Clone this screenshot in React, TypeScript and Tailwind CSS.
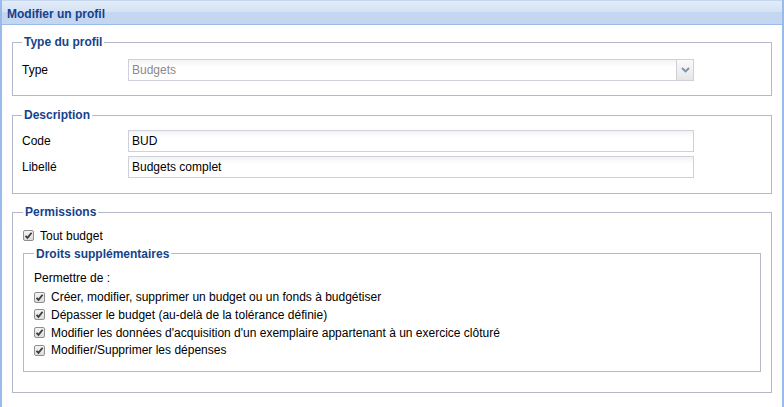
import React from 'react';

const font = { fontFamily: '"Liberation Sans", Arial, sans-serif' };

function Check() {
    return (
        <span className="inline-flex h-[11px] w-[11px] shrink-0 items-center justify-center rounded-[2px] border border-[#8f8f8f] bg-gradient-to-b from-[#f4f4f4] to-[#dcdcdc]">
            <svg width="9" height="9" viewBox="0 0 9 9">
                <path d="M1.5 4.8 L3.5 6.8 L7.6 1.8" fill="none" stroke="#3c3c3c" strokeWidth="1.8" />
            </svg>
        </span>
    );
}

function CheckRow({ label }: { label: string }) {
    return (
        <label className="flex h-[17.6px] items-center gap-[6px] text-[12px] text-black">
            <Check />
            <span>{label}</span>
        </label>
    );
}

function Legend({ children }: { children: React.ReactNode }) {
    return <legend className="px-[2px] text-[12px] font-bold leading-[14px] text-[#15428b]">{children}</legend>;
}

function Field({ label, value, disabled, combo }: { label: string; value: string; disabled?: boolean; combo?: boolean }) {
    return (
        <div className="flex items-center">
            <span className="w-[106px] text-[12px] text-black">{label}</span>
            <div className="flex h-[22px] w-[566px] border border-[#cfd0dd] bg-white">
                <div className={`flex flex-1 items-center bg-gradient-to-b from-[#f3f3f3] to-white to-[35%] px-[3px] text-[12px] ${disabled ? 'text-[#8a8a8a]' : 'text-black'}`}>
                    {value}
                </div>
                {combo && (
                    <div className="flex w-[17px] items-center justify-center border-l border-[#cfd0dd] bg-gradient-to-b from-[#fafafa] to-[#e6e6e6]">
                        <svg width="9" height="6" viewBox="0 0 9 6">
                            <path d="M1 1 L4.5 4.5 L8 1" fill="none" stroke="#7a8fb8" strokeWidth="1.8" />
                        </svg>
                    </div>
                )}
            </div>
        </div>
    );
}

export default function App() {
    return (
        <div className="h-[407px] w-[784px] bg-white" style={font}>
            <div className="flex h-[407px] flex-col border-x-2 border-b-0 border-[#99bbe8]">
                <div className="flex h-[25px] flex-col border-t border-[#c5d6ee] border-b border-b-[#99bbe8]">
                    <div className="h-[11px] bg-gradient-to-b from-[#e2ecf8] to-[#d4e2f4]" />
                    <div className="flex flex-1 items-start bg-[#c5d7f0] pl-[5px]">
                        <span className="-mt-[7px] text-[12px] font-bold text-[#15428b]">Modifier un profil</span>
                    </div>
                </div>

                <div className="flex flex-col px-[10px] pt-[10px]">
                    <fieldset className="h-[61px] border border-[#b5b8c8] pl-[9px] pt-[10px]">
                        <Legend>Type du profil</Legend>
                        <Field label="Type" value="Budgets" disabled combo />
                    </fieldset>

                    <fieldset className="mt-[12px] h-[86px] border border-[#b5b8c8] pl-[9px] pt-[8px]">
                        <Legend>Description</Legend>
                        <div className="flex flex-col gap-[4px]">
                            <Field label="Code" value="BUD" />
                            <Field label="Libellé" value="Budgets complet" />
                        </div>
                    </fieldset>

                    <fieldset className="mt-[11px] h-[188px] border border-[#b5b8c8] pl-[10px] pr-[10px] pt-[8px]">
                        <Legend>Permissions</Legend>
                        <CheckRow label="Tout budget" />
                        <fieldset className="mt-[2px] h-[125px] border border-[#b5b8c8] pl-[10px] pt-[8px]">
                            <Legend>Droits supplémentaires</Legend>
                            <div className="mb-[2px] text-[12px] text-black">Permettre de :</div>
                            <CheckRow label="Créer, modifier, supprimer un budget ou un fonds à budgétiser" />
                            <CheckRow label="Dépasser le budget (au-delà de la tolérance définie)" />
                            <CheckRow label="Modifier les données d'acquisition d'un exemplaire appartenant à un exercice clôturé" />
                            <CheckRow label="Modifier/Supprimer les dépenses" />
                        </fieldset>
                    </fieldset>
                </div>
            </div>
        </div>
    );
}
